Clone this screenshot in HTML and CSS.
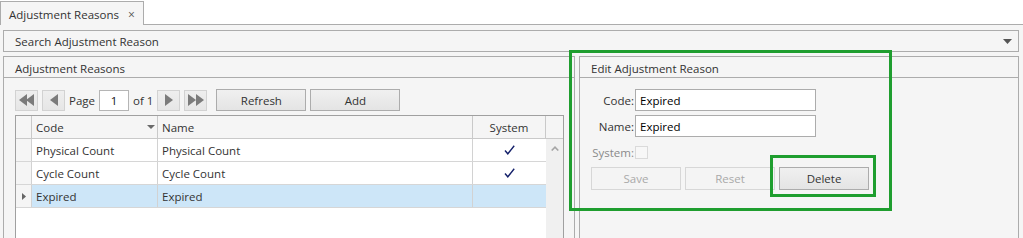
FILE: index.html
```html
<!DOCTYPE html>
<html>
<head>
<meta charset="utf-8">
<link rel="stylesheet" href="styles.css">
</head>
<body>
<div class="tabstrip">
  <div class="tab"><span class="tab-title">Adjustment Reasons</span><span class="tab-close">×</span></div>
  <div class="tabfill"></div>
</div>
<div class="page">
  <div class="search">
    <span>Search Adjustment Reason</span>
    <svg class="search-arrow" width="9" height="5" viewBox="0 0 9 5"><path d="M0 0H9L4.5 5Z" fill="#555"/></svg>
  </div>
  <div class="panels">
    <section class="panel panel-left">
      <div class="panel-head">Adjustment Reasons</div>
      <div class="panel-body">
        <div class="pager">
          <button class="nav"><svg width="16" height="12" viewBox="0 0 16 12"><path d="M0 6L8 0V12Z M7 6L15 0V12Z" fill="#7b7b7b"/></svg></button>
          <button class="nav"><svg width="8" height="12" viewBox="0 0 8 12"><path d="M0 6L8 0V12Z" fill="#7b7b7b"/></svg></button>
          <span class="pager-label">Page</span>
          <span class="page-input">1</span>
          <span class="pager-label">of 1</span>
          <button class="nav"><svg width="8" height="12" viewBox="0 0 8 12"><path d="M8 6L0 0V12Z" fill="#7b7b7b"/></svg></button>
          <button class="nav"><svg width="16" height="12" viewBox="0 0 16 12"><path d="M8 6L0 0V12Z M16 6L8 0V12Z" fill="#7b7b7b"/></svg></button>
          <button class="btn btn-refresh">Refresh</button>
          <button class="btn btn-add">Add</button>
        </div>
        <div class="grid">
          <div class="grid-head">
            <div class="cell c-ind"></div>
            <div class="cell c-code">Code<svg class="sort-arrow" width="8" height="4" viewBox="0 0 8 4"><path d="M0 0H8L4 4Z" fill="#6a6a6a"/></svg></div>
            <div class="cell c-name">Name</div>
            <div class="cell c-sys">System</div>
            <div class="cell c-scroll"></div>
          </div>
          <div class="grid-body">
            <div class="rows">
              <div class="row">
                <div class="cell c-ind"></div>
                <div class="cell c-code">Physical Count</div>
                <div class="cell c-name">Physical Count</div>
                <div class="cell c-sys"><svg width="11" height="10" viewBox="0 0 11 10"><path d="M1 5.5L3.8 8.8L10.2 0.8" fill="none" stroke="#14206a" stroke-width="1.4"/></svg></div>
              </div>
              <div class="row">
                <div class="cell c-ind"></div>
                <div class="cell c-code">Cycle Count</div>
                <div class="cell c-name">Cycle Count</div>
                <div class="cell c-sys"><svg width="11" height="10" viewBox="0 0 11 10"><path d="M1 5.5L3.8 8.8L10.2 0.8" fill="none" stroke="#14206a" stroke-width="1.4"/></svg></div>
              </div>
              <div class="row row-selected">
                <div class="cell c-ind"><svg width="4" height="7" viewBox="0 0 4 7"><path d="M0 0L4 3.5L0 7Z" fill="#666"/></svg></div>
                <div class="cell c-code">Expired</div>
                <div class="cell c-name">Expired</div>
                <div class="cell c-sys"></div>
              </div>
            </div>
            <div class="scrollbar">
              <svg width="8" height="5" viewBox="0 0 8 5"><path d="M0.7 4.5L4 1.2L7.3 4.5" fill="none" stroke="#a5a5a5" stroke-width="1.6"/></svg>
            </div>
          </div>
        </div>
      </div>
    </section>
    <section class="panel panel-right">
      <div class="panel-head">Edit Adjustment Reason</div>
      <div class="panel-body form">
        <div class="form-row">
          <label class="form-label">Code:</label>
          <span class="text-input">Expired</span>
        </div>
        <div class="form-row">
          <label class="form-label">Name:</label>
          <span class="text-input">Expired</span>
        </div>
        <div class="form-row">
          <label class="form-label disabled">System:</label>
          <span class="checkbox"></span>
        </div>
        <div class="form-actions">
          <button class="btn btn-wide" disabled>Save</button>
          <button class="btn btn-wide" disabled>Reset</button>
          <button class="btn btn-wide">Delete</button>
        </div>
      </div>
    </section>
  </div>
</div>
<div class="highlight hl-edit"></div>
<div class="highlight hl-delete"></div>
</body>
</html>
```
FILE: styles.css
```css
* { box-sizing: border-box; }

html, body { overflow: hidden; }

body {
  margin: 0;
  width: 1023px;
  height: 238px;
  position: relative;
  background: #f5f5f5;
  font-family: "Open Sans", "Noto Sans", sans-serif;
  font-size: 11.5px;
  color: #333;
}

.tabstrip {
  display: flex;
  height: 25px;
  background: #fff;
}

.tab {
  width: 144px;
  margin-top: 1px;
  border: 1px solid #acacac;
  border-bottom: none;
  background: #f5f5f5;
  display: flex;
  align-items: center;
  padding: 2px 0 0 8px;
}

.tab-close {
  margin-left: 9px;
  font-size: 12px;
  color: #555;
}

.tabfill {
  flex: 1;
  border-bottom: 1px solid #acacac;
}

.page {
  padding: 5px 4px 0 3px;
}

.search {
  height: 22px;
  border: 1px solid #acacac;
  display: flex;
  align-items: center;
  justify-content: space-between;
  padding: 0 6px 0 11px;
}

.panels {
  display: flex;
  gap: 4px;
  margin-top: 4px;
}

.panel {
  height: 182px;
  border: 1px solid #acacac;
  border-bottom: none;
  background: #f5f5f5;
}

.panel-left { width: 572px; }
.panel-right { width: 440px; }

.panel-head {
  height: 21px;
  border-bottom: 1px solid #acacac;
  padding: 2px 0 0 11px;
  display: flex;
  align-items: center;
}

.panel-body {
  padding: 11px 0 0 11px;
}

.pager {
  display: flex;
  align-items: center;
  gap: 4px;
  height: 22px;
}

button {
  font-family: inherit;
  font-size: 11.5px;
  margin: 0;
  padding: 0;
}

.nav {
  width: 23px;
  height: 21px;
  border: 1px solid #d2d2d2;
  background: linear-gradient(#eeeeee, #e6e6e6);
  display: flex;
  align-items: center;
  justify-content: center;
}

.page-input {
  width: 30px;
  height: 21px;
  border: 1px solid #b5b5b5;
  background: #fff;
  display: flex;
  align-items: center;
  justify-content: center;
  color: #111;
}

.btn {
  height: 22px;
  border: 1px solid #acacac;
  background: linear-gradient(#f0f0f0, #e4e4e4);
  color: #333;
}

.btn:disabled {
  border-color: #d7d7d7;
  background: #f4f4f4;
  color: #a9a9a9;
}

.btn-refresh { width: 90px; margin-left: 5px; }
.btn-add { width: 90px; }

.grid {
  margin-top: 4px;
  width: 549px;
  height: 130px;
  border: 1px solid #a0a0a0;
  border-bottom: none;
  background: #fff;
}

.grid-head {
  display: flex;
  height: 23px;
  background: #f5f5f5;
  border-bottom: 1px solid #c9c9c9;
}

.cell {
  height: 100%;
  border-right: 1px solid #d2d2d2;
  display: flex;
  align-items: center;
  padding-left: 4px;
  white-space: nowrap;
}

.grid-head .cell { border-right-color: #c9c9c9; }

.c-ind { width: 16px; padding-left: 0; justify-content: center; }
.c-code { width: 126px; justify-content: space-between; padding-right: 2px; }
.c-name { width: 315px; }
.c-sys { width: 73px; justify-content: center; padding-left: 0; }
.c-scroll { width: 17px; border-right: none; }

.grid-body {
  display: flex;
  height: 106px;
}

.rows {
  width: 530px;
}

.row {
  display: flex;
  height: 23px;
  border-bottom: 1px solid #d6d6d6;
}

.row .c-ind { background: #f5f5f5; border-right-color: #d2d2d2; }
.row .c-sys { border-right: none; }

.row-selected .c-code,
.row-selected .c-name,
.row-selected .c-sys { background: #cde6f8; }

.scrollbar {
  width: 17px;
  background: #f0f0f0;
  display: flex;
  justify-content: center;
  align-items: flex-start;
  padding-top: 7px;
}

.form-row {
  display: flex;
  align-items: center;
  height: 22px;
  margin-bottom: 4px;
  margin-left: -11px;
}

.form-label {
  width: 54px;
  text-align: right;
  margin-right: 1px;
}

.form-label.disabled { color: #8a8a8a; }

.text-input {
  width: 181px;
  height: 22px;
  border: 1px solid #acacac;
  background: #fff;
  color: #000;
  display: flex;
  align-items: center;
  padding-left: 4px;
}

.checkbox {
  width: 13px;
  height: 13px;
  border: 1px solid #dadada;
  background: #f7f7f7;
  margin-top: 1px;
}

.form-actions {
  display: flex;
  gap: 4px;
  margin-top: 1px;
}

.btn-wide { width: 90px; height: 23px; }

.highlight {
  position: absolute;
  border: 3px solid #1f9e2f;
}

.hl-edit {
  left: 569px;
  top: 50px;
  width: 323px;
  height: 161px;
}

.hl-delete {
  left: 770px;
  top: 155px;
  width: 106px;
  height: 42px;
}
```
